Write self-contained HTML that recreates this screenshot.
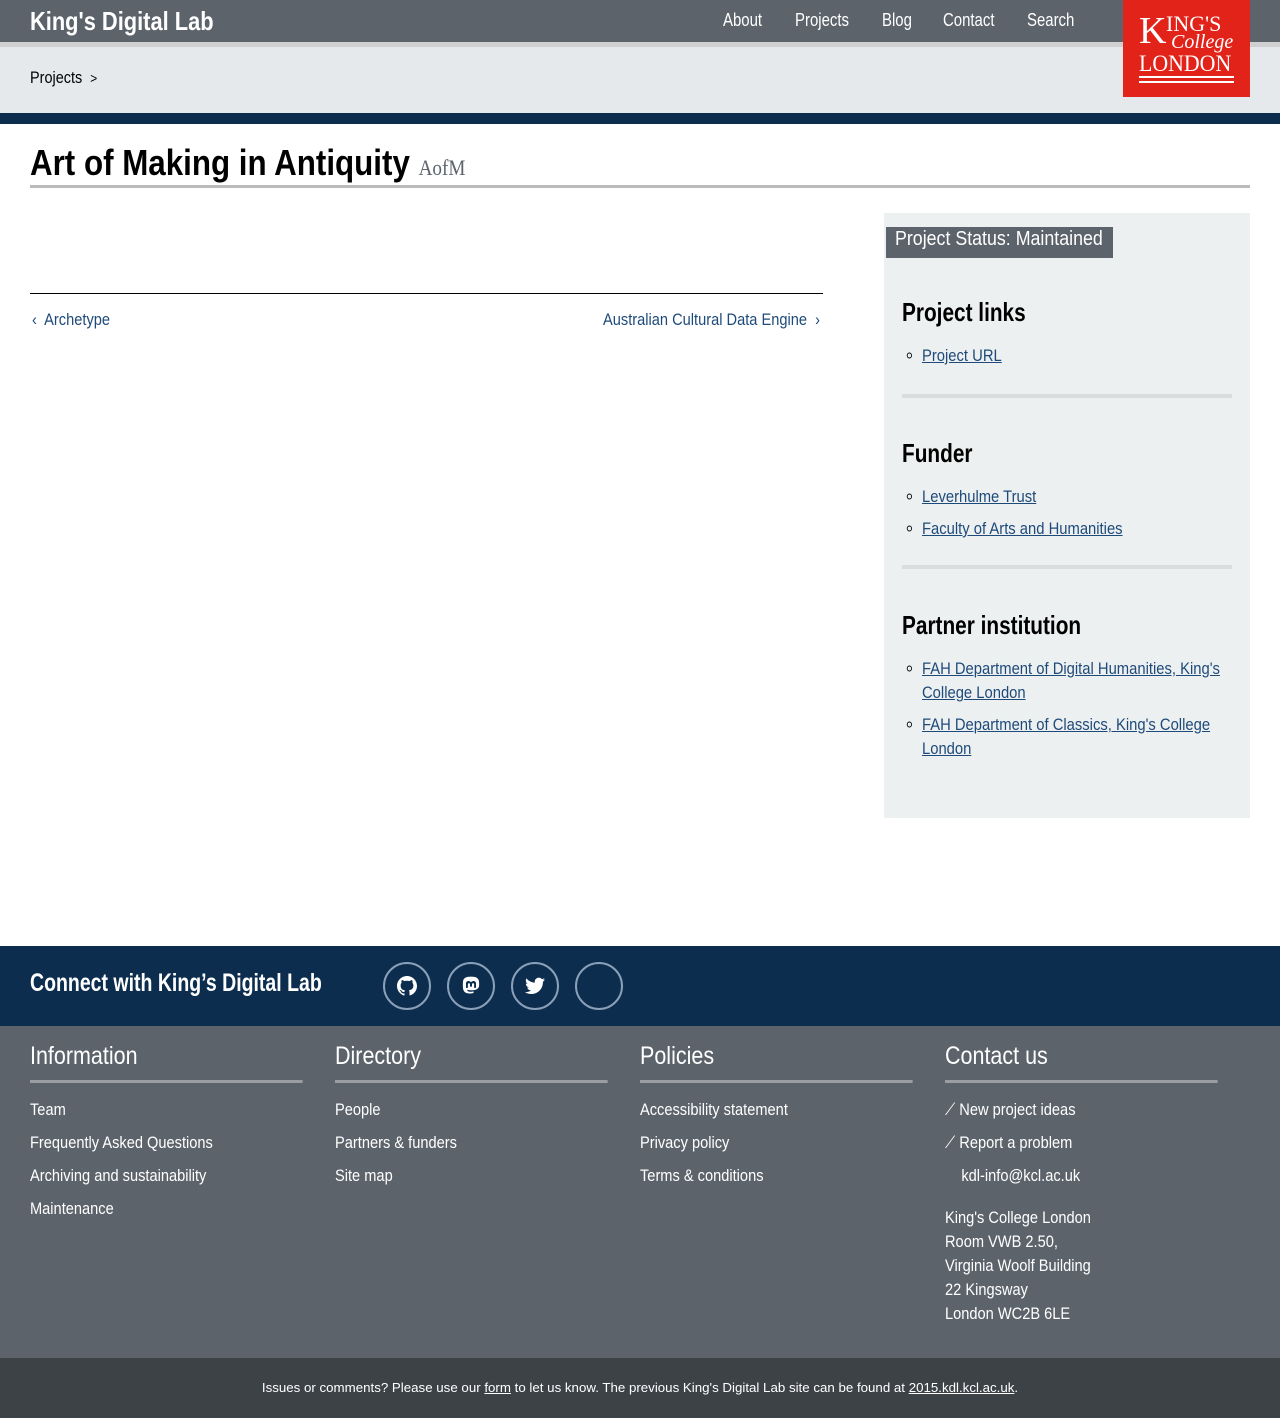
<!DOCTYPE html>
<html><head><meta charset="utf-8">
<style>
*{margin:0;padding:0;box-sizing:border-box}
body{width:1280px;height:1418px;position:relative;font-family:"Liberation Sans Narrow","Liberation Sans",sans-serif;background:#fff;color:#000;overflow:hidden}
.abs{position:absolute}
.sx{transform-origin:0 50%}
a{color:#1e4a7a}
.top{left:0;top:0;width:1280px;height:42px;background:#5c636b}
.brand{left:30px;top:6px;color:#fff;font-size:26px;font-weight:bold;transform:scaleX(.84);transform-origin:0 0;white-space:nowrap}
.nav{top:10px;color:#fff;font-size:18px;transform:scaleX(.83);transform-origin:0 0}
.stripe{left:0;top:42px;width:1280px;height:5px;background:#cfd0d1}
.crumb{left:0;top:47px;width:1280px;height:66px;background:#e5e9ec}
.band{left:0;top:113px;width:1280px;height:11px;background:#0c2d4e}
.logo{left:1123px;top:0;width:127px;height:97px;background:#e2231a;color:#fff;font-family:"Liberation Serif",serif}
.side{left:884px;top:213px;width:366px;height:605px;background:#edf0f0}
.side h3{position:absolute;left:18px;font-size:26px;font-weight:bold;transform:scaleX(.8);transform-origin:0 0;white-space:nowrap}
.side ul{position:absolute;left:38px;list-style:circle;font-size:17px;line-height:24px;width:345px;transform:scaleX(.87);transform-origin:0 0}
.side li{margin-bottom:8px}
.hr{position:absolute;left:18px;width:330px;height:4px;background:#dadcdd}
.fnav{left:0;top:946px;width:1280px;height:80px;background:#0c2d4e}
.circ{top:962px;width:48px;height:48px;border:2px solid #8aa0b8;border-radius:50%;display:flex;align-items:center;justify-content:center}
.foot{left:0;top:1026px;width:1280px;height:332px;background:#5c636b;color:#fff}
.col{position:absolute;top:0;width:317px;transform:scaleX(.86);transform-origin:0 0}
.col h4{font-weight:normal;font-size:25px;margin-top:14px;padding-top:2px;border-bottom:3px solid #9a9ea3;height:43px}
.col p{font-size:17px;margin-top:16px;line-height:17px;white-space:nowrap}
.col p.first{margin-top:18px}
.bot{left:0;top:1358px;width:1280px;height:60px;background:#3d4247;color:#fff;font-size:13.3px;text-align:center;line-height:60px}
.bot a{color:#fff}
</style></head><body>
<div class="abs top"></div>
<div class="abs brand">King's Digital Lab</div>
<div class="abs nav" style="left:723px">About</div>
<div class="abs nav" style="left:795px">Projects</div>
<div class="abs nav" style="left:882px">Blog</div>
<div class="abs nav" style="left:943px">Contact</div>
<div class="abs nav" style="left:1027px">Search</div>
<div class="abs stripe"></div>
<div class="abs crumb"></div>
<div class="abs" style="left:30px;top:68px;font-size:17px;transform:scaleX(.85);transform-origin:0 0">Projects &nbsp;<span style="font-size:14px">&gt;</span></div>
<div class="abs band"></div>
<div class="abs logo">
 <div class="abs" style="left:16px;top:12px;font-size:38px;line-height:38px">K</div>
 <div class="abs" style="left:43px;top:13px;font-size:22px;line-height:22px">ING'S</div>
 <div class="abs" style="left:48px;top:32px;font-size:20px;line-height:20px;font-style:italic">College</div>
 <div class="abs" style="left:16px;top:52px;font-size:23px;line-height:23px;transform:scaleX(.95);transform-origin:0 0">LONDON</div>
 <div class="abs" style="left:16px;top:76px;width:95px;height:2px;background:#fff"></div>
 <div class="abs" style="left:16px;top:81px;width:95px;height:2px;background:#fff"></div>
</div>
<div class="abs" style="left:30px;top:142px;font-size:36px;font-weight:bold;white-space:nowrap;transform:scaleX(.87);transform-origin:0 0">Art of Making in Antiquity <span style="font-family:'Liberation Serif',serif;font-weight:normal;font-size:22px;color:#5c636b">AofM</span></div>
<div class="abs" style="left:30px;top:185px;width:1220px;height:3px;background:#bbb"></div>
<div class="abs" style="left:30px;top:293px;width:793px;height:1px;background:#000"></div>
<div class="abs" style="left:32px;top:310px;font-size:17px;color:#1e4a7a;transform:scaleX(.86);transform-origin:0 0">‹&nbsp; Archetype</div>
<div class="abs" style="left:603px;top:310px;font-size:17px;color:#1e4a7a;white-space:nowrap;transform:scaleX(.86);transform-origin:0 0">Australian Cultural Data Engine &nbsp;›</div>
<div class="abs side">
 <div class="abs" style="left:2px;top:14px;background:#5c636b;width:227px;height:31px"></div>
 <div class="abs" style="left:11px;top:15px;color:#fff;font-size:20px;white-space:nowrap;transform:scaleX(.89);transform-origin:0 0">Project Status: Maintained</div>
 <h3 style="top:84px">Project links</h3>
 <ul style="top:131px"><li><a href="#">Project URL</a></li></ul>
 <div class="hr" style="top:181px"></div>
 <h3 style="top:225px">Funder</h3>
 <ul style="top:272px"><li><a href="#">Leverhulme Trust</a></li><li><a href="#">Faculty of Arts and Humanities</a></li></ul>
 <div class="hr" style="top:352px"></div>
 <h3 style="top:397px">Partner institution</h3>
 <ul style="top:444px"><li><a href="#">FAH Department of Digital Humanities, King's College London</a></li><li><a href="#">FAH Department of Classics, King's College London</a></li></ul>
</div>
<div class="abs fnav"></div>
<div class="abs" style="left:30px;top:969px;color:#fff;font-size:25px;font-weight:bold;white-space:nowrap;transform:scaleX(.78);transform-origin:0 0">Connect with King’s Digital Lab</div>
<div class="abs circ" style="left:383px"><svg width="20" height="20" viewBox="0 0 16 16"><path fill="#fff" d="M8 0C3.6 0 0 3.6 0 8c0 3.5 2.3 6.5 5.5 7.6.4.1.5-.2.5-.4v-1.4c-2.2.5-2.7-1-2.7-1-.4-.9-.9-1.2-.9-1.2-.7-.5.1-.5.1-.5.8.1 1.2.8 1.2.8.7 1.2 1.9.9 2.3.7.1-.5.3-.9.5-1.1-1.8-.2-3.6-.9-3.6-4 0-.9.3-1.6.8-2.1-.1-.2-.4-1 .1-2.1 0 0 .7-.2 2.2.8.6-.2 1.300-.3 2-.3s1.4.1 2 .3c1.5-1 2.2-.8 2.2-.8.4 1.1.2 1.9.1 2.1.5.6.8 1.3.8 2.1 0 3.1-1.9 3.700-3.6 3.9.3.3.5.8.5 1.5v2.2c0 .2.1.5.6.4C13.7 14.5 16 11.5 16 8c0-4.4-3.6-8-8-8z"/></svg></div>
<div class="abs circ" style="left:447px"><svg width="20" height="20" viewBox="0 0 16 16"><path fill="#fff" fill-rule="evenodd" d="M8 .5C4 .5 1.5 1.5 1.5 5.5v3c0 4 2 5.5 5.5 5.5 1.5 0 3-.4 3-.4v-1.300s-1.5.4-3 .3C5.5 12.5 5 12 5 11c1 .3 2.5.4 3.5.4 3 0 6-.8 6-4V5.5C14.5 1.5 12 .5 8 .5zM4 9.5h1.5V6.5c0-1 1.7-1 1.700 0v2h1.6v-2c0-1 1.700-1 1.700 0v3H12V6c0-2.500-3-2.500-4-1C7 3.500 4 3.500 4 6z"/></svg></div>
<div class="abs circ" style="left:511px"><svg width="20" height="18" viewBox="0 0 24 20"><path fill="#fff" d="M24 2.4c-.9.4-1.8.6-2.8.8 1-.6 1.8-1.6 2.2-2.7-1 .6-2 1-3.1 1.2C19.3.7 18 0 16.6 0c-2.7 0-4.9 2.2-4.900 4.9 0 .4 0 .8.1 1.1C7.7 5.8 4.1 3.9 1.7.9c-.4.7-.7 1.6-.7 2.5 0 1.7.9 3.2 2.2 4.1-.8 0-1.6-.2-2.2-.6v.1c0 2.4 1.7 4.4 3.9 4.8-.4.1-.8.2-1.300.2-.3 0-.6 0-.9-.1.6 2 2.4 3.4 4.600 3.4-1.700 1.300-3.800 2.100-6.100 2.100-.4 0-.8 0-1.2-.1C2.2 18.8 4.8 19.6 7.5 19.600c9.1 0 14-7.5 14-14v-.6c1-.7 1.800-1.600 2.500-2.600z"/></svg></div>
<div class="abs circ" style="left:575px"></div>
<div class="abs foot">
 <div class="col" style="left:30px"><h4>Information</h4><p class="first">Team</p><p>Frequently Asked Questions</p><p>Archiving and sustainability</p><p>Maintenance</p></div>
 <div class="col" style="left:335px"><h4>Directory</h4><p class="first">People</p><p>Partners &amp; funders</p><p>Site map</p></div>
 <div class="col" style="left:640px"><h4>Policies</h4><p class="first">Accessibility statement</p><p>Privacy policy</p><p>Terms &amp; conditions</p></div>
 <div class="col" style="left:945px"><h4>Contact us</h4><p class="first">⟋ New project ideas</p><p>⟋ Report a problem</p><p style="padding-left:19px">kdl-info@kcl.ac.uk</p>
 <p style="line-height:24px;margin-top:22px">King's College London<br>Room VWB 2.50,<br>Virginia Woolf Building<br>22 Kingsway<br>London WC2B 6LE</p></div>
</div>
<div class="abs bot">Issues or comments? Please use our <a href="#">form</a> to let us know. The previous King's Digital Lab site can be found at <a href="#">2015.kdl.kcl.ac.uk</a>.</div>
</body></html>
